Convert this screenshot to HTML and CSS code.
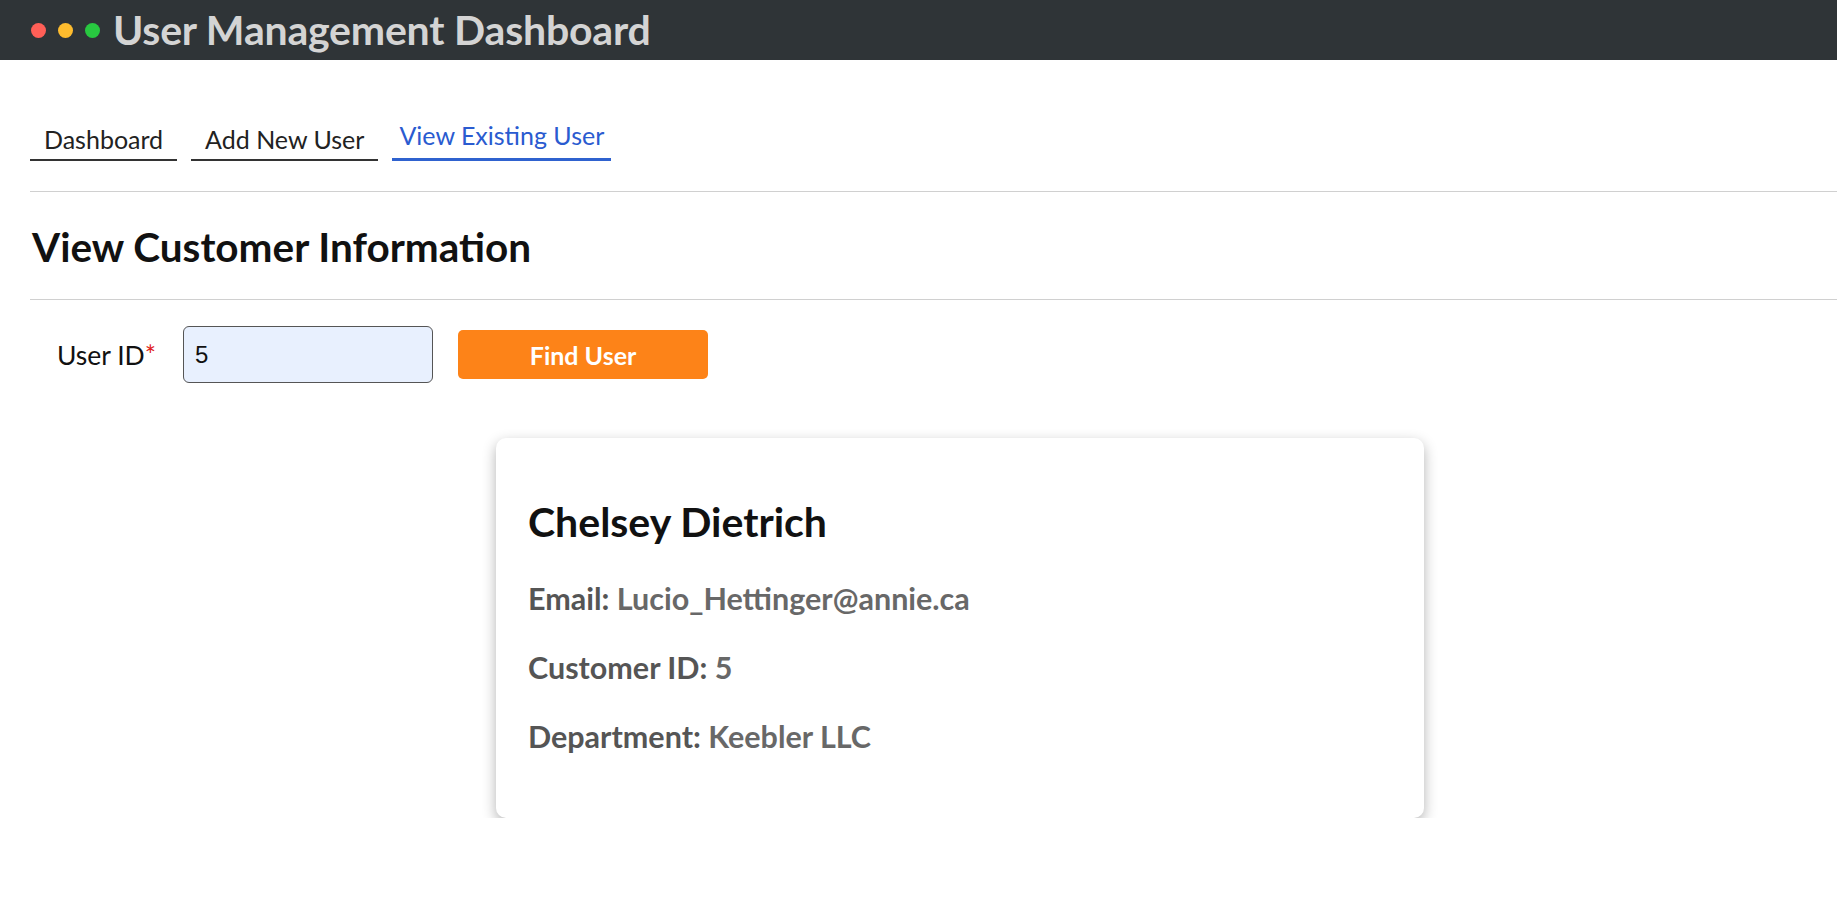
FILE: index.html
```html
<!DOCTYPE html>
<html lang="en">
<head>
<meta charset="utf-8">
<title>User Management Dashboard</title>
<link rel="stylesheet" href="styles.css">
</head>
<body>
<header class="topbar">
  <div class="dots">
    <span class="dot dot-red"></span>
    <span class="dot dot-yellow"></span>
    <span class="dot dot-green"></span>
  </div>
  <h1 class="app-title">User Management Dashboard</h1>
</header>
<main class="content">
  <nav class="tabs">
    <a class="tab">Dashboard</a>
    <a class="tab">Add New User</a>
    <a class="tab tab-active">View Existing User</a>
  </nav>
  <hr class="divider divider-top">
  <h2 class="page-title">View Customer Information</h2>
  <hr class="divider">
  <form class="find-form">
    <label class="field-label" for="uid">User ID<span class="req">*</span></label>
    <input class="field-input" id="uid" type="text" value="5">
    <button class="find-btn" type="button">Find User</button>
  </form>
  <section class="card">
    <h3 class="card-name">Chelsey Dietrich</h3>
    <p class="card-row"><span class="card-key">Email:</span> <span class="card-val">Lucio_Hettinger@annie.ca</span></p>
    <p class="card-row"><span class="card-key">Customer ID:</span> <span class="card-val">5</span></p>
    <p class="card-row"><span class="card-key">Department:</span> <span class="card-val">Keebler LLC</span></p>
  </section>
</main>
</body>
</html>
```
FILE: styles.css
```css
* { box-sizing: border-box; }
html, body { margin: 0; padding: 0; background: #fff; }
body { font-family: Lato, "Noto Sans", sans-serif; color: #111; }

.topbar {
  height: 60px;
  background: #2f3437;
  display: flex;
  align-items: center;
  padding-left: 31px;
}
.dots { display: flex; gap: 12px; margin-right: 13px; }
.dot { width: 15px; height: 15px; border-radius: 50%; display: block; }
.dot-red { background: #ff5f57; }
.dot-yellow { background: #febc2e; }
.dot-green { background: #28c840; }
.app-title {
  margin: 0;
  color: #d4d4d4;
  font-size: 41px;
  line-height: 50px;
  font-weight: 700;
  letter-spacing: -0.2px;
}

.content { padding-left: 30px; }

.tabs { display: flex; gap: 14px; padding-top: 60px; align-items: flex-end; }
.tab {
  display: block;
  font-size: 25px;
  line-height: 30px;
  color: #222;
  padding: 0 14px 5px;
  border-bottom: 2px solid #333;
}
.tab-active {
  color: #2a5bd0;
  border-bottom: 3px solid #2f62cf;
  padding: 0 7px 8px;
}

.divider { border: 0; border-top: 1px solid #d0d0d0; margin: 0; }
.divider-top { margin-top: 30px; }

.page-title {
  margin: 0;
  font-size: 40.5px;
  font-weight: 700;
  line-height: 48px;
  padding: 31px 0 0 2px;
  height: 107px;
}

.find-form {
  display: flex;
  align-items: center;
  padding: 26px 0 0 27px;
}
.field-label { font-size: 26.5px; color: #111; margin-right: 27px; }
.req { color: #e02020; }
.field-input {
  width: 250px;
  height: 57px;
  border: 1px solid #555;
  border-radius: 6px;
  background: #e8f0fe;
  font-family: "Liberation Sans", Arial, sans-serif;
  font-size: 24px;
  padding: 0 11px;
  color: #111;
}
.find-btn {
  margin-left: 25px;
  width: 250px;
  height: 49px;
  border: 0;
  border-radius: 5px;
  background: #fd8318;
  color: #fff;
  font-family: Lato, "Noto Sans", sans-serif;
  font-size: 25px;
  font-weight: 700;
}

.card {
  width: 928px;
  margin: 55px 0 0 466px;
  background: #fff;
  border-radius: 10px;
  box-shadow: 0 5px 14px rgba(0,0,0,0.3);
  padding: 60px 32px 64px;
}
.card-name { margin: 0 0 34px; font-size: 41px; font-weight: 700; line-height: 48px; color: #111; }
.card-row { margin: 0; font-size: 30.5px; line-height: 36px; font-weight: 700; padding-bottom: 33px; }
.card-row:last-child { padding-bottom: 0; }
.card-key { color: #555; }
.card-val { color: #686868; }
```
